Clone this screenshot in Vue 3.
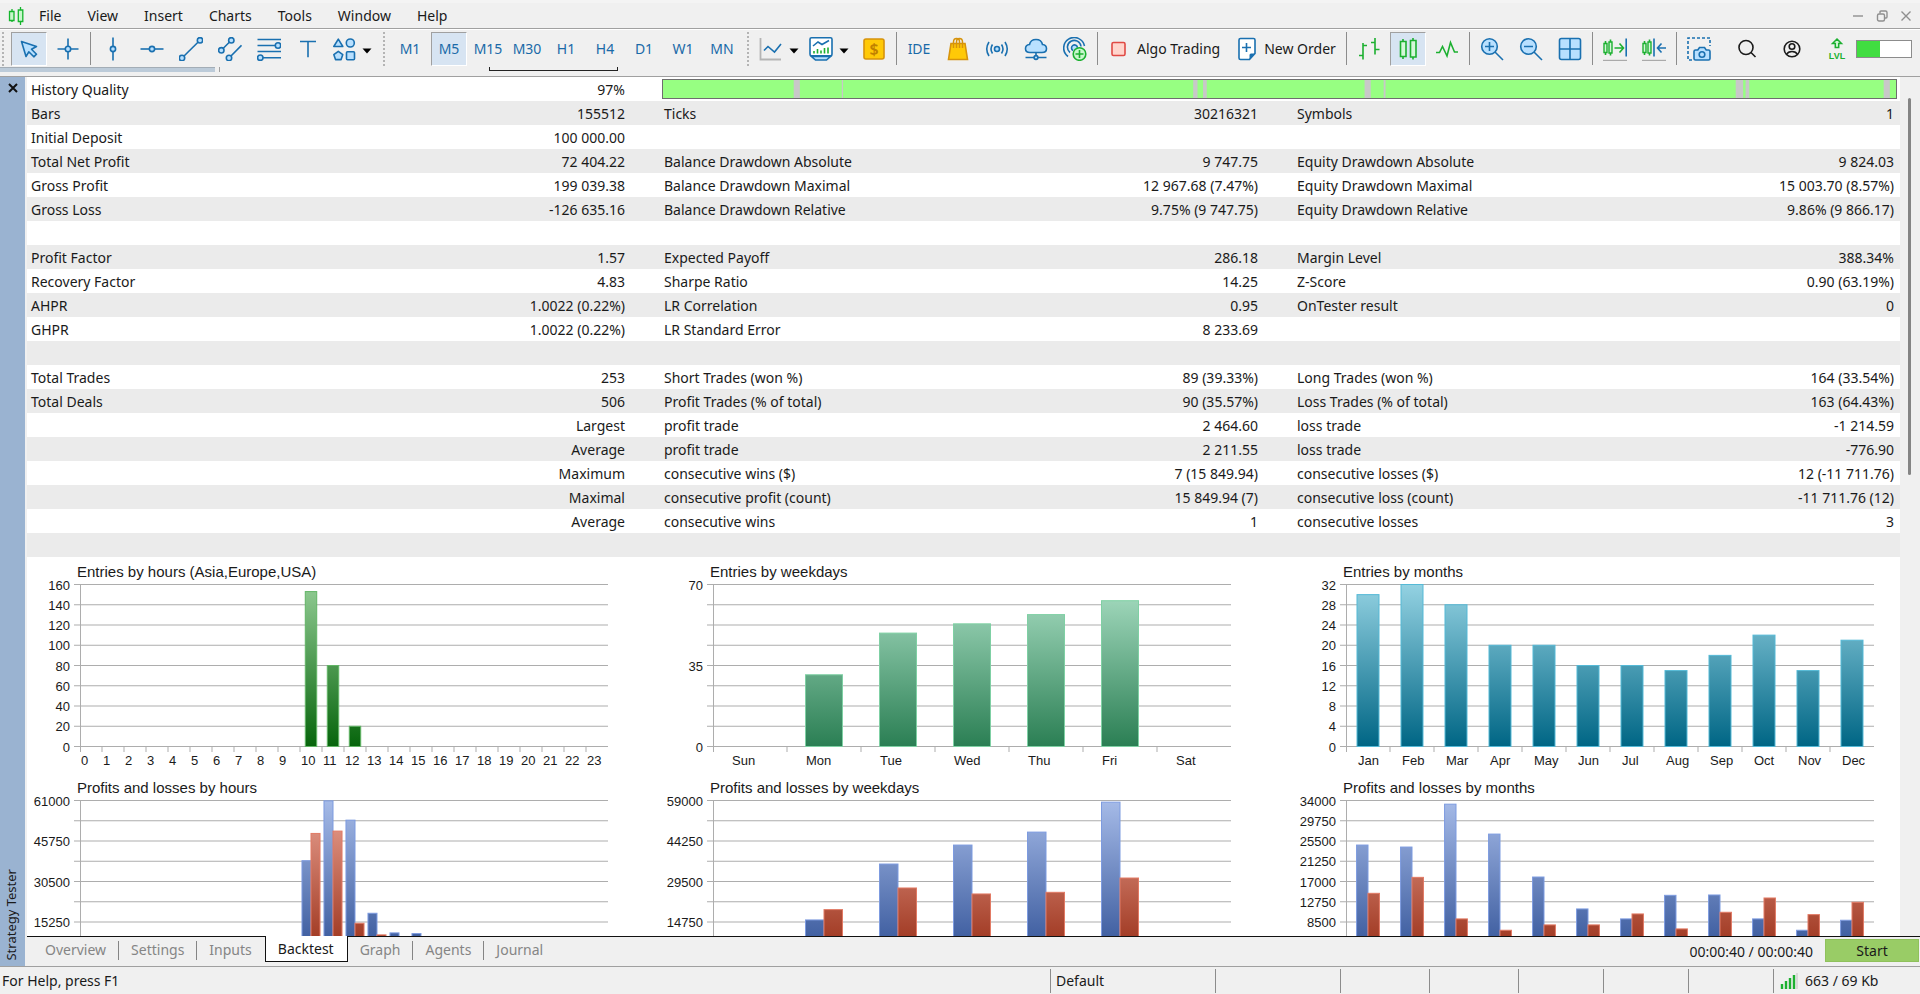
<template>
  <div class="terminal">
    <div class="title-edge"></div>
    <header class="menu-bar">
      <svg class="app-logo" viewBox="0 0 16 18" v-html="icons.logo"></svg>
      <nav class="menu">
        <button v-for="item in menuItems" :key="item" type="button" class="menu-item">{{ item }}</button>
      </nav>
      <div class="window-controls">
        <button v-for="name in ['minimize', 'restore', 'close']" :key="name" type="button" :aria-label="name">
          <svg viewBox="0 0 12 12" v-html="icons[name]"></svg>
        </button>
      </div>
    </header>

    <div class="toolbar">
      <template v-for="(tool, i) in tools" :key="i">
        <span v-if="tool.type === 'grip'" class="grip"></span>
        <span v-else-if="tool.type === 'sep'" class="separator"></span>
        <button
          v-else
          type="button"
          :class="['tool', tool.type, { active: tool.active }]"
          :aria-label="tool.label || tool.icon"
        >
          <svg v-if="tool.icon" viewBox="0 0 24 24" v-html="icons[tool.icon]"></svg>
          <span v-if="tool.label">{{ tool.label }}</span>
          <svg v-if="tool.type === 'split'" class="caret" viewBox="0 0 10 6"><path d="M0.5 0.5h9L5 5.5z" /></svg>
        </button>
      </template>
      <div class="toolbar-end">
        <button v-for="name in ['search', 'account', 'level']" :key="name" type="button" class="tool" :aria-label="name">
          <svg viewBox="0 0 24 24" v-html="icons[name]"></svg>
        </button>
        <div class="level-bar"><div class="level-fill" :style="{ width: level + '%' }"></div></div>
      </div>
    </div>

    <div class="dock-edge">
      <span class="dock-bar"></span>
      <span class="dock-tick"></span>
      <span class="dock-bracket"></span>
    </div>

    <main class="tester">
      <aside class="side-strip">
        <button type="button" class="side-close" aria-label="Close">
          <svg viewBox="0 0 12 12"><path d="M2 2l8 8M10 2l-8 8" fill="none" stroke="#111" stroke-width="2" /></svg>
        </button>
        <span class="side-title">Strategy Tester</span>
      </aside>

      <div class="tester-body">
        <div class="scroll-area">
          <div class="report-clip">
            <div class="report">
              <table class="stats">
                <tbody>
                  <tr>
                    <td>History Quality</td>
                    <td class="value">97%</td>
                    <td colspan="4" class="quality-cell">
                      <svg class="quality">
                        <rect
                          v-for="gap in qualityGaps"
                          :key="gap[0]"
                          :x="gap[0] + '%'"
                          y="0"
                          :width="gap[1] + '%'"
                          height="100%"
                          fill="#c8c8c8"
                        />
                      </svg>
                    </td>
                  </tr>
                  <tr v-for="(row, r) in rows" :key="r">
                    <td v-for="(cell, c) in row" :key="c" :class="{ value: c % 2 === 1 }">{{ cell }}</td>
                  </tr>
                </tbody>
              </table>

              <div class="charts">
                <figure v-for="(chart, k) in charts" :key="chart.title" class="chart">
                  <figcaption>{{ chart.title }}</figcaption>
                  <svg :class="['plot', chart.cats.key]">
                    <defs>
                      <linearGradient
                        v-for="(s, n) in chart.series"
                        :id="`fill-${k}-${n}`"
                        :key="n"
                        gradientUnits="userSpaceOnUse"
                        x1="0"
                        y1="0"
                        x2="0"
                        :y2="PLOT_HEIGHT"
                      >
                        <stop offset="0" :stop-color="s.color.top" />
                        <stop offset="1" :stop-color="s.color.bottom" />
                      </linearGradient>
                    </defs>
                    <line
                      v-for="n in 9"
                      :key="'g' + n"
                      x1="-6"
                      x2="100%"
                      :y1="lineY(n - 1)"
                      :y2="lineY(n - 1)"
                      stroke="#adadad"
                    />
                    <line x1="0.5" x2="0.5" y1="0" y2="168" stroke="#adadad" />
                    <text
                      v-for="(label, n) in axisLabels(chart)"
                      :key="'y' + n"
                      x="-10"
                      :y="label.y"
                      text-anchor="end"
                    >{{ label.text }}</text>
                    <g v-if="chart.showNames">
                      <line
                        v-for="n in chart.cats.names.length - 1"
                        :key="'t' + n"
                        :x1="slotX(chart, n)"
                        :x2="slotX(chart, n)"
                        y1="162"
                        y2="168"
                        stroke="#adadad"
                      />
                      <text
                        v-for="(name, n) in chart.cats.names"
                        :key="'x' + n"
                        :x="slotX(chart, n)"
                        :dx="chart.cats.inset"
                        y="181"
                      >{{ name }}</text>
                    </g>
                    <template v-for="(s, n) in chart.series" :key="'s' + n">
                      <rect
                        v-for="bar in bars(chart, n)"
                        :key="bar.x"
                        :x="bar.x"
                        :y="bar.y"
                        :width="bar.width"
                        :height="bar.height"
                        :fill="`url(#fill-${k}-${n})`"
                        :stroke="s.color.edge"
                      />
                    </template>
                  </svg>
                </figure>
              </div>
            </div>
          </div>
          <div class="scrollbar"><div class="thumb"></div></div>
        </div>

        <div class="tab-bar">
          <nav class="tabs">
            <button v-for="tab in tabs" :key="tab" type="button" :class="['tab', { current: tab === activeTab }]" @click="activeTab = tab">
              {{ tab }}
            </button>
          </nav>
          <span class="elapsed">00:00:40 / 00:00:40</span>
          <button type="button" class="start">Start</button>
        </div>
      </div>
    </main>

    <footer class="status-bar">
      <span class="help">For Help, press F1</span>
      <span class="profile">Default</span>
      <span class="cell wide"></span>
      <span class="cell mid"></span>
      <span class="cell mid"></span>
      <span class="cell"></span>
      <span class="cell"></span>
      <span class="cell"></span>
      <span class="traffic">
        <svg viewBox="0 0 18 18" v-html="icons.traffic"></svg>
        663 / 69 Kb
      </span>
    </footer>
  </div>
</template>

<script setup>
import { ref } from 'vue'

const menuItems = ['File', 'View', 'Insert', 'Charts', 'Tools', 'Window', 'Help']
const tabs = ['Overview', 'Settings', 'Inputs', 'Backtest', 'Graph', 'Agents', 'Journal']
const activeTab = ref('Backtest')
const level = 42

// shared svg attributes
const blue = 'fill="none" stroke="#1a70b0" stroke-width="1.6"'
const light = 'fill="#b8e0ff" stroke="#1a70b0" stroke-width="1.6"'
const green = 'fill="none" stroke="#1cb030" stroke-width="1.6"'
const gold = 'fill="#ffc907" stroke="#d6930c" stroke-width="1.6"'
const gray = 'fill="none" stroke="#8f8f8f" stroke-width="1.4"'
const black = 'fill="none" stroke="#1b1b1b" stroke-width="1.6"'

const icons = {
  logo: `<g fill="#c8f7cc" stroke="#14b52c" stroke-width="1.3"><path d="M4 2v13M12.500 0v18"/><path d="M1.500 4.500h4.500v9H1.500zM10.300 3h4.500v11.500h-4.500z"/></g>`,
  minimize: `<path d="M1 6h10" ${gray}/>`,
  restore: `<path d="M4 3.500V2q0-1 1-1h4.500q1.500 0 1.500 1.500V7q0 1-1 1H9" ${gray}/><rect x="1.500" y="4" width="7" height="7" rx="1.500" ${gray}/>`,
  close: `<path d="M1.500 1.500l9 9M10.500 1.500l-9 9" ${gray}/>`,
  cursor: `<path d="M4.500 4.500L19.500 9.500L14.500 12.200L19.500 17.200L16.800 19.800L11.800 14.800L9 19.500Z" ${light} stroke-linejoin="round"/>`,
  crosshair: `<path d="M12 1.500v21M1.500 12h21" ${blue}/><circle cx="12" cy="12" r="2.700" ${light}/>`,
  vline: `<path d="M12 0.500v23" ${blue}/><circle cx="12" cy="12" r="2.600" ${light}/>`,
  hline: `<path d="M0.500 12h23" ${blue}/><circle cx="12" cy="12" r="2.600" ${light}/>`,
  trend: `<path d="M3 21L21 3.300" ${blue}/><circle cx="3" cy="21" r="2.700" ${light}/><circle cx="21" cy="3.300" r="2.700" ${light}/>`,
  channel: `<path d="M3.300 13.300l10-10M11 21L23.500 8.300" ${blue}/><circle cx="3.300" cy="13.300" r="2.700" ${light}/><circle cx="13.300" cy="3.300" r="2.700" ${light}/><circle cx="11" cy="21" r="2.700" ${light}/>`,
  fibo: `<path d="M0.500 2.500H24M0.500 8.500H19M0.500 14.500H24M5 20.700H24" ${blue}/><circle cx="21" cy="8.500" r="2.700" ${light}/><circle cx="3.300" cy="20.700" r="2.700" ${light}/>`,
  text: `<path d="M4 4.500h16M12 4.500v15.700" ${blue}/>`,
  shapes: `<path d="M6.300 2.200l4.500 7.300h-9zM6.300 14.300l4.500 3.300-1.700 5H3.500l-1.700-5z" ${light} stroke-linejoin="round"/><circle cx="18.300" cy="6" r="4" ${light}/><rect x="14.500" y="14.700" width="8" height="8" rx="1" ${light}/>`,
  lineChart: `<path d="M1.500 1v21.500H22" fill="none" stroke="#b4b4b4" stroke-width="1.800"/><path d="M5 13.500l4-4 6.500 5.500L22 7" ${blue}/>`,
  indicators: `<rect x="1" y="0.800" width="22" height="18" rx="1.500" fill="#fff" stroke="#1a70b0" stroke-width="1.600"/><path d="M4 9l5-4 4 2.500L20 3.500" ${blue}/><path d="M5 14v2.500M8.500 12v4.500M12 13.500v3M15.500 11v5.500M19 10.500v6" ${green}/><path d="M2.500 19.500h19l-4 3.500h-11z" ${light}/>`,
  dollar: `<rect x="2" y="2" width="20" height="20" rx="2" ${gold}/><text x="12" y="17.500" font-family="Noto Sans, sans-serif" font-size="16" font-weight="600" text-anchor="middle" fill="#c08000">$</text>`,
  market: `<path d="M5 6.500h14l2.500 16h-19z" ${gold}/><path d="M7.500 11V5q0-3.500 3-3.500T13.500 5v6M10.500 11V5q0-3.500 3-3.500T16.500 5v6" fill="none" stroke="#d6930c" stroke-width="1.500"/>`,
  signals: `<circle cx="12" cy="12" r="2.500" ${light}/><path d="M7.500 7.500q-3 4.500 0 9M16.500 7.500q3 4.500 0 9M4 5q-4.500 7 0 14M20 5q4.500 7 0 14" ${blue}/>`,
  cloud: `<path d="M6 15.500q-4.500 0-4.500-3.800Q1.500 8 5.500 7.500 6.500 2.500 12 2.500t6.500 5q4 0.500 4 4.200 0 3.800-4.500 3.800z" ${light}/><path d="M12 15.500v4M1.500 20.500h21" ${blue}/><circle cx="12" cy="20.500" r="1.900" ${light}/>`,
  vps: `<path d="M5 19.500A10.500 10.500 0 1 1 21.500 9M7 15.500A6.800 6.800 0 1 1 18 9.500" ${blue}/><path d="M10 13.500a3 3 0 1 1 4.500-2.800" ${light}/><circle cx="16.500" cy="17" r="6.300" fill="#c9f7cd" stroke="#1cb030" stroke-width="1.600"/><path d="M16.500 13v8M12.500 17h8" ${green}/>`,
  algo: `<rect x="4" y="5.500" width="13" height="13" rx="1.500" fill="#ffd5cd" stroke="#e04a45" stroke-width="1.600"/>`,
  order: `<path d="M4 3q0-1.500 1.500-1.500h13Q20 1.500 20 3v13.500l-5.500 6h-9Q4 22.500 4 21z" fill="#fff" stroke="#1a70b0" stroke-width="1.600"/><path d="M20 16.500h-4q-1.500 0-1.500 1.500v4.500z" fill="#1a70b0"/><path d="M11.500 6v9M7 10.500h9" ${blue}/>`,
  bars: `<path d="M6 6v16.500M6 8.500h4M2 18.500h4M18 1v16.500M14 5.500h4M18 12.500h4.500" ${green}/>`,
  candles: `<path d="M7 2v20M17 1v21.500" ${green}/><path d="M4.500 4.500h5.500v15H4.500zM14.500 3.500H20v16.500h-5.500z" fill="#d4f7d8" stroke="#1cb030" stroke-width="1.600"/>`,
  line: `<path d="M1 15.500h3.500l3-6 4.500 9.500 3.500-13.500 4 9.500h3.500" ${green}/>`,
  zoomIn: `<circle cx="9.500" cy="9.500" r="7.800" ${light}/><path d="M15 15l8 8M9.500 5v9M5 9.500h9" ${blue}/>`,
  zoomOut: `<circle cx="9.500" cy="9.500" r="7.800" ${light}/><path d="M15 15l8 8M5 9.500h9" ${blue}/>`,
  tile: `<rect x="1.500" y="1.500" width="21" height="21" rx="2" ${light}/><path d="M12 1.500v21M1.500 12h21" ${blue}/>`,
  scrollEnd: `<path d="M2.500 4v14M7.500 2.500v16" ${green}/><path d="M1 6.500h3v9H1zM6 5h3v11H6z" fill="#d4f7d8" stroke="#1cb030" stroke-width="1.400"/><path d="M11.500 11h9M16.500 6.500l4 4.500-4 4.500" ${green}/><path d="M23.200 1.500v18" ${blue}/><path d="M0 23.500h24" fill="none" stroke="#aaa" stroke-width="1.400"/>`,
  shift: `<path d="M2.500 4v14M7.500 2.500v16" ${green}/><path d="M1 6.500h3v9H1zM6 5h3v11H6z" fill="#d4f7d8" stroke="#1cb030" stroke-width="1.400"/><path d="M12 1.500v18M15.500 11H24M19.500 6.500l-4 4.500 4 4.500" ${blue}/><path d="M0 23.500h24" fill="none" stroke="#aaa" stroke-width="1.400"/>`,
  camera: `<path d="M5 23H1V1h22v8" ${blue} stroke-dasharray="3 2"/><path d="M7 14.500q0-1.500 1.500-1.500h2.300l1.700-2.500h5l1.700 2.500h2.300q1.500 0 1.500 1.500v7q0 1.500-1.500 1.500h-13Q7 23 7 21.500z" ${light}/><circle cx="15" cy="17.500" r="2.800" ${blue}/>`,
  search: `<circle cx="11" cy="10.500" r="7" ${black}/><path d="M16 15.500l4.500 4.500" ${black}/>`,
  account: `<circle cx="12" cy="12" r="7.800" ${black}/><circle cx="12" cy="9.500" r="2.800" ${black}/><path d="M6.500 17.500q1.500-3 5.500-3t5.500 3" ${black}/>`,
  level: `<path d="M12 2l4.500 4.500h-2.800v4h-3.400v-4H7.500z" fill="#d4f7d8" stroke="#1cb030" stroke-width="1.500"/><text x="12" y="21.500" font-family="Liberation Sans, sans-serif" font-size="9" font-weight="700" text-anchor="middle" fill="#1cb030">LVL</text>`,
  traffic: `<path d="M2 12v5M6 9v8M10 6v11M14 3v14" fill="none" stroke="#1cb030" stroke-width="2.400"/><path d="M17 1v16" fill="none" stroke="#d8d8d8" stroke-width="2"/>`
}

const tools = [
  { type: 'grip' },
  { icon: 'cursor', active: true },
  { icon: 'crosshair' },
  { type: 'sep' },
  ...['vline', 'hline', 'trend', 'channel', 'fibo', 'text'].map((icon) => ({ icon })),
  { type: 'split', icon: 'shapes' },
  { type: 'grip' },
  ...['M1', 'M5', 'M15', 'M30', 'H1', 'H4', 'D1', 'W1', 'MN'].map((label) => ({ label, active: label === 'M5' })),
  { type: 'grip' },
  { type: 'split', icon: 'lineChart' },
  { type: 'split', icon: 'indicators' },
  { icon: 'dollar' },
  { type: 'sep' },
  { label: 'IDE' },
  ...['market', 'signals', 'cloud', 'vps'].map((icon) => ({ icon })),
  { type: 'sep' },
  { type: 'wide', icon: 'algo', label: 'Algo Trading' },
  { type: 'wide', icon: 'order', label: 'New Order' },
  { type: 'sep' },
  { icon: 'bars' },
  { icon: 'candles', active: true },
  { icon: 'line' },
  { type: 'sep' },
  ...['zoomIn', 'zoomOut', 'tile'].map((icon) => ({ icon })),
  { type: 'sep' },
  { icon: 'scrollEnd' },
  { icon: 'shift' },
  { type: 'sep' },
  { icon: 'camera' }
]

// [start, width] in percent of the quality bar
const qualityGaps = [
  [10.6, 0.5], [14.5, 0.1], [43, 0.35], [43.8, 0.3], [56.9, 0.5],
  [58.45, 0.15], [87, 0.6], [87.8, 0.3], [99, 0.5]
]

const blank = ['', '', '', '', '', '']
const rows = [
  ['Bars', '155512', 'Ticks', '30216321', 'Symbols', '1'],
  ['Initial Deposit', '100 000.00', '', '', '', ''],
  ['Total Net Profit', '72 404.22', 'Balance Drawdown Absolute', '9 747.75', 'Equity Drawdown Absolute', '9 824.03'],
  ['Gross Profit', '199 039.38', 'Balance Drawdown Maximal', '12 967.68 (7.47%)', 'Equity Drawdown Maximal', '15 003.70 (8.57%)'],
  ['Gross Loss', '-126 635.16', 'Balance Drawdown Relative', '9.75% (9 747.75)', 'Equity Drawdown Relative', '9.86% (9 866.17)'],
  blank,
  ['Profit Factor', '1.57', 'Expected Payoff', '286.18', 'Margin Level', '388.34%'],
  ['Recovery Factor', '4.83', 'Sharpe Ratio', '14.25', 'Z-Score', '0.90 (63.19%)'],
  ['AHPR', '1.0022 (0.22%)', 'LR Correlation', '0.95', 'OnTester result', '0'],
  ['GHPR', '1.0022 (0.22%)', 'LR Standard Error', '8 233.69', '', ''],
  blank,
  ['Total Trades', '253', 'Short Trades (won %)', '89 (39.33%)', 'Long Trades (won %)', '164 (33.54%)'],
  ['Total Deals', '506', 'Profit Trades (% of total)', '90 (35.57%)', 'Loss Trades (% of total)', '163 (64.43%)'],
  ['', 'Largest', 'profit trade', '2 464.60', 'loss trade', '-1 214.59'],
  ['', 'Average', 'profit trade', '2 211.55', 'loss trade', '-776.90'],
  ['', 'Maximum', 'consecutive wins ($)', '7 (15 849.94)', 'consecutive losses ($)', '12 (-11 711.76)'],
  ['', 'Maximal', 'consecutive profit (count)', '15 849.94 (7)', 'consecutive loss (count)', '-11 711.76 (12)'],
  ['', 'Average', 'consecutive wins', '1', 'consecutive losses', '3'],
  blank
]

const PLOT_HEIGHT = 162

// inset: label offset from the slot start; single / paired: share of a slot the bars take
const hours = { key: 'hours', names: [...Array(24).keys()], inset: 1, single: 0.52, paired: 0.82 }
const weekdays = { key: 'weekdays', names: ['Sun', 'Mon', 'Tue', 'Wed', 'Thu', 'Fri', 'Sat'], inset: 19, single: 0.5, paired: 0.5 }
const months = {
  key: 'months',
  names: ['Jan', 'Feb', 'Mar', 'Apr', 'May', 'Jun', 'Jul', 'Aug', 'Sep', 'Oct', 'Nov', 'Dec'],
  inset: 12,
  single: 0.5,
  paired: 0.52
}

const profit = { top: '#a6bbe8', bottom: '#2f5095', edge: '#7d9be0' }
const loss = { top: '#eba596', bottom: '#962a12', edge: '#e27a64' }

const atHours = (values) => hours.names.map((h) => values[h] || 0)

// labelEvery / labelTo: which of the nine grid lines get a value
const charts = [
  {
    title: 'Entries by hours (Asia,Europe,USA)',
    cats: hours,
    max: 160,
    labelEvery: 1,
    labelTo: 8,
    showNames: true,
    series: [{ color: { top: '#92cc94', bottom: '#07650c', edge: '#62b566' }, values: atHours({ 10: 153, 11: 80, 12: 20 }) }]
  },
  {
    title: 'Entries by weekdays',
    cats: weekdays,
    max: 70,
    labelEvery: 4,
    labelTo: 8,
    showNames: true,
    series: [{ color: { top: '#a9dec3', bottom: '#2b7f54', edge: '#7fd0a4' }, values: [0, 31, 49, 53, 57, 63, 0] }]
  },
  {
    title: 'Entries by months',
    cats: months,
    max: 32,
    labelEvery: 1,
    labelTo: 8,
    showNames: true,
    series: [{ color: { top: '#94d2e2', bottom: '#006685', edge: '#55b9d6' }, values: [30, 32, 28, 20, 20, 16, 16, 15, 18, 22, 15, 21] }]
  },
  {
    title: 'Profits and losses by hours',
    cats: hours,
    max: 61000,
    labelEvery: 2,
    labelTo: 6,
    series: [
      { color: profit, values: atHours({ 10: 38330, 11: 60870, 12: 53600, 13: 18540, 14: 11150, 15: 10900 }) },
      { color: loss, values: atHours({ 10: 48600, 11: 49480, 12: 14780, 13: 10400 }) }
    ]
  },
  {
    title: 'Profits and losses by weekdays',
    cats: weekdays,
    max: 59000,
    labelEvery: 2,
    labelTo: 6,
    series: [
      { color: profit, values: [0, 15500, 35860, 42770, 47490, 58400, 0] },
      { color: loss, values: [0, 19260, 27140, 24960, 25560, 30770, 0] }
    ]
  },
  {
    title: 'Profits and losses by months',
    cats: months,
    max: 34000,
    labelEvery: 1,
    labelTo: 6,
    series: [
      { color: profit, values: [24650, 24230, 33230, 26950, 17940, 11240, 9150, 14100, 14170, 9150, 6770, 8870] },
      { color: loss, values: [14520, 17870, 9150, 6770, 7890, 7890, 10190, 7050, 10540, 13540, 10050, 12640] }
    ]
  }
]

const lineY = (n) => (n * PLOT_HEIGHT) / 8 + 0.5
const slotX = (chart, n) => (n * 100) / chart.cats.names.length + '%'

function axisLabels(chart) {
  const labels = []
  for (let n = 0; n <= chart.labelTo; n += chart.labelEvery) {
    labels.push({ y: Math.round(lineY(n)) + 5, text: chart.max - (chart.max / 8) * n })
  }
  return labels
}

function bars(chart, seriesIndex) {
  const slot = 100 / chart.cats.names.length
  const count = chart.series.length
  const share = count > 1 ? chart.cats.paired : chart.cats.single
  const width = (slot * share) / count
  return chart.series[seriesIndex].values
    .map((value, n) => {
      const height = (value / chart.max) * PLOT_HEIGHT
      return {
        x: slot * n + (slot * (1 - share)) / 2 + width * seriesIndex + '%',
        y: PLOT_HEIGHT - height + 0.5,
        width: width + '%',
        height
      }
    })
    .filter((bar) => bar.height > 0)
}
</script>

<style>
body {
  margin: 0;
}
</style>

<style scoped>
.terminal {
  height: 100vh;
  display: flex;
  flex-direction: column;
  background: #f0f0f0;
  color: #1a1a1a;
  font-family: "Noto Sans", sans-serif;
  font-size: 14px;
  overflow: hidden;
}

.terminal * {
  box-sizing: border-box;
}

button {
  padding: 0;
  border: none;
  background: none;
  color: inherit;
  font: inherit;
}

svg {
  display: block;
  flex: none;
}

.title-edge {
  flex: none;
  height: 3px;
  background: #f4f4f4;
}

/* menu */
.menu-bar {
  flex: none;
  display: flex;
  align-items: center;
  height: 26px;
  padding: 0 8px;
  border-bottom: 1px solid #a0a0a0;
}

.app-logo {
  width: 16px;
  height: 18px;
}

.menu {
  display: flex;
  margin-left: 2px;
}

.menu-item {
  padding: 0 13px;
}

.window-controls {
  display: flex;
  gap: 12px;
  margin-left: auto;
}

.window-controls svg {
  width: 12px;
  height: 12px;
}

/* toolbar */
.toolbar {
  flex: none;
  display: flex;
  align-items: center;
  gap: 3px;
  height: 36px;
  padding: 2px 8px 0 0;
  border-top: 1px solid #fff;
}

.tool {
  flex: none;
  display: flex;
  align-items: center;
  justify-content: center;
  width: 36px;
  height: 34px;
  border: 1px solid transparent;
  color: #1a6aa8;
}

.tool svg {
  width: 24px;
  height: 24px;
}

.tool.active {
  background: #d7e4f2;
  border-color: #a0a0a0 #fff #fff #a0a0a0;
}

.tool.split {
  justify-content: flex-start;
  gap: 6px;
  width: 47px;
  padding-left: 2px;
}

.tool .caret {
  width: 10px;
  height: 6px;
  margin-top: 4px;
}

.tool.wide {
  gap: 5px;
  width: auto;
  padding: 0 5px;
  color: #1a1a1a;
}

.grip {
  flex: none;
  width: 4px;
  height: 34px;
  margin: 0 3px;
  background: repeating-linear-gradient(#b4b4b4 0 2px, transparent 2px 4px) center / 2px 100% no-repeat;
}

.grip:first-child {
  margin: 0 3px 0 1px;
}

.separator {
  flex: none;
  width: 3px;
  height: 33px;
  background: linear-gradient(#8c8c8c, #8c8c8c) center / 1px 100% no-repeat;
}

.toolbar-end {
  display: flex;
  align-items: center;
  gap: 9px;
  margin-left: auto;
}

.level-bar {
  width: 56px;
  height: 18px;
  margin-left: -8px;
  border: 1px solid #8c8c8c;
  background: #fff;
}

.level-fill {
  height: 100%;
  background: #41dd41;
}

/* lower edge of the docked toolbars */
.dock-edge {
  flex: none;
  display: flex;
  height: 12px;
  padding-top: 2px;
  border-bottom: 1px solid #a0a0a0;
}

.dock-bar {
  width: 215px;
  height: 5px;
  border-top: 1px solid #a3adb6;
  background: #bccbd9;
}

.dock-tick {
  width: 1px;
  height: 5px;
  margin-left: 4px;
  background: #a0a0a0;
}

.dock-bracket {
  width: 129px;
  height: 4px;
  margin-left: 269px;
  border: 1px solid #222;
  border-top: none;
}

/* tester window */
.tester {
  flex: 1;
  display: flex;
  min-height: 0;
}

.side-strip {
  flex: none;
  display: flex;
  flex-direction: column;
  align-items: center;
  justify-content: space-between;
  width: 25px;
  padding: 5px 4px 5px 0;
  background: #9ab3d1;
}

.side-close {
  padding-left: 4px;
}

.side-close svg {
  width: 12px;
  height: 12px;
}

.side-title {
  writing-mode: vertical-rl;
  transform: rotate(180deg);
  font-size: 13px;
  line-height: 16px;
}

.tester-body {
  flex: 1;
  display: flex;
  flex-direction: column;
  min-width: 0;
  padding-left: 2px;
}

.scroll-area {
  flex: 1;
  display: flex;
  min-height: 0;
}

.report-clip {
  flex: 1;
  min-width: 0;
  overflow: hidden;
  background: #fff;
}

/* the last column keeps its gutter outside the visible area */
.report {
  margin-right: -26px;
}

.scrollbar {
  flex: none;
  width: 20px;
  padding: 21px 9px 0 8px;
}

.thumb {
  height: 45%;
  border-radius: 2px;
  background: #858585;
}

.stats {
  width: 100%;
  border-collapse: collapse;
  table-layout: fixed;
}

.stats tr:nth-child(even) {
  background: #ebebeb;
}

.stats td {
  height: 24px;
  padding: 2px 0 0 4px;
  line-height: 22px;
  white-space: nowrap;
}

.stats .value {
  padding: 2px 35px 0 0;
  text-align: right;
}

.stats .value:last-child {
  padding-right: 32px;
}

.stats .quality-cell {
  padding: 0 29px 0 2px;
}

.quality {
  width: 100%;
  height: 20px;
  border: 1px solid #6e6e6e;
  background: #97ff82;
}

.charts {
  display: grid;
  grid-template-columns: repeat(3, 1fr);
}

.chart {
  height: 216px;
  margin: 0;
  padding: 5px 52px 0 53px;
  font-family: "Liberation Sans", sans-serif;
}

.chart figcaption {
  height: 22px;
  margin-left: -3px;
  font-size: 15px;
  line-height: 20px;
}

.plot {
  width: 100%;
  height: 189px;
  overflow: visible;
  font-size: 13px;
  fill: #1a1a1a;
}

.plot.weekdays {
  width: calc(100% - 10px);
}

/* tabs */
.tab-bar {
  flex: none;
  display: flex;
  align-items: center;
  height: 30px;
  border-top: 1px solid #111;
}

.tabs {
  display: flex;
  align-self: flex-start;
  margin-left: 6px;
}

.tab {
  position: relative;
  height: 25px;
  padding: 0 13px 0 12px;
  color: #858585;
}

.tab::after {
  content: "";
  position: absolute;
  right: 0;
  top: 4px;
  width: 1px;
  height: 19px;
  background: #858585;
}

.tab:last-child::after,
.tab.current::after,
.tab:has(+ .current)::after {
  display: none;
}

.tab.current {
  height: 26px;
  margin-top: -1px;
  border: 1px solid #111;
  border-top: none;
  background: #fff;
  color: #1a1a1a;
}

.elapsed {
  margin-left: auto;
}

.start {
  width: 94px;
  height: 23px;
  margin: 0 1px 3px 12px;
  border: 1px solid #8fc15c;
  background: #99cc66;
}

/* status */
.status-bar {
  flex: none;
  display: flex;
  align-items: center;
  height: 28px;
  border-top: 1px solid #a0a0a0;
}

.status-bar > span {
  flex: none;
  height: 24px;
  line-height: 24px;
  border-left: 1px solid #8c8c8c;
}

.status-bar .help {
  flex: 1;
  padding-left: 2px;
  border: none;
}

.profile {
  width: 165px;
  padding-left: 5px;
}

.cell {
  width: 85px;
}

.cell.mid {
  width: 89px;
}

.cell.wide {
  width: 125px;
}

.traffic {
  display: flex;
  align-items: center;
  gap: 7px;
  width: 147px;
  padding-left: 6px;
}

.traffic svg {
  width: 18px;
  height: 18px;
}
</style>
